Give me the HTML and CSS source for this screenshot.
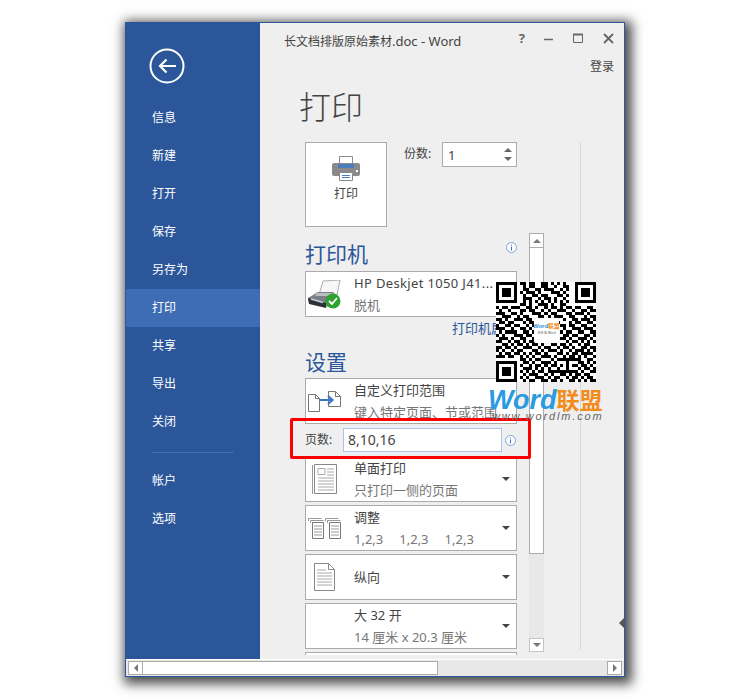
FILE: index.html
```html
<!DOCTYPE html>
<html lang="zh-CN">
<head>
  <meta charset="UTF-8" />
  <title>打印 - Word</title>
  <link rel="stylesheet" href="styles.css">
</head>
<body>
  <div class="window">
    <div class="upper">
      <nav class="side">
        <svg class="back" width="36" height="36" viewBox="0 0 36 36">
          <circle cx="18" cy="18" r="16.500" fill="none" stroke="#fff" stroke-width="2"/>
          <path d="M27 18H11M17.500 11.500L11 18l6.500 6.500" fill="none" stroke="#fff" stroke-width="2.200"/>
        </svg>
        <a>信息</a>
        <a>新建</a>
        <a>打开</a>
        <a>保存</a>
        <a>另存为</a>
        <a class="on">打印</a>
        <a>共享</a>
        <a>导出</a>
        <a>关闭</a>
        <div class="side-line"></div>
        <a>帐户</a>
        <a>选项</a>
      </nav>

      <main class="main">
        <div class="titlebar">
          <span class="doc-title">长文档排版原始素材<span class="latin">.doc - Word</span></span>
          <div class="controls">
            <span class="help">?</span>
            <svg width="10" height="10" viewBox="0 0 10 10"><path d="M0 6.500h9" stroke="#666" stroke-width="1.500"/></svg>
            <svg width="11" height="11" viewBox="0 0 11 11"><path d="M.5 1.500h9v8h-9z" fill="none" stroke="#666"/><path d="M0 1.500h10" stroke="#666" stroke-width="2"/></svg>
            <svg width="11" height="11" viewBox="0 0 11 11"><path d="M1 1l9 9M10 1l-9 9" stroke="#666" stroke-width="1.800"/></svg>
          </div>
        </div>
        <div class="login">登录</div>
        <h1>打印</h1>

        <div class="panel">
          <div class="top-row">
            <button class="print-btn">
              <svg width="28" height="25" viewBox="0 0 28 25">
                <path d="M7.500.5h13v9h-13z" fill="#fff" stroke="#8a8a8a"/>
                <path d="M2 7h24a2 2 0 0 1 2 2v9a2 2 0 0 1-2 2H2a2 2 0 0 1-2-2V9a2 2 0 0 1 2-2z" fill="#8a8a8a"/>
                <path d="M6 8h16v4H6z" fill="#4a7ebb"/>
                <path d="M7.500 16.500h13v8h-13z" fill="#fff" stroke="#8a8a8a"/>
                <path d="M10 19.500h8M10 21.500h8" stroke="#4a7ebb"/>
                <path d="M24 14h2v2h-2z" fill="#fff"/>
              </svg>
              <span>打印</span>
            </button>
            <label class="copies-label">份数:</label>
            <div class="copies">
              <span class="copies-val">1</span>
              <div class="spin"><i class="up"></i><i class="down"></i></div>
            </div>
          </div>

          <div class="scroll-area">
            <div class="col">
              <div class="head-row">
                <h2>打印机</h2>
                <svg class="info info-head" width="11" height="11" viewBox="0 0 11 11"><circle cx="5.500" cy="5.500" r="5" fill="#fff" stroke="#7ba3db"/><path d="M5.500 4.500v4M5.500 2.500v1" stroke="#3f76c4"/></svg>
              </div>
              <div class="opt">
                <div class="opt-icon">
                  <svg width="33" height="29" viewBox="0 0 33 29">
                    <path d="M15 1l17-1-3 15H11z" fill="#f7f7f7" stroke="#9a9a9a" stroke-width=".8"/>
                    <path d="M0 18l10-6h15l4 5v6l-11 4-17-4z" fill="#7b8087"/>
                    <path d="M0 18l18 5v5L1 24z" fill="#2d3136"/>
                    <path d="M3 19l12 3.500" stroke="#c5d2de" stroke-width="1.500"/>
                    <path d="M9 13h15l2 3H7z" fill="#b9bec3"/>
                    <circle cx="25" cy="21" r="7.500" fill="#2fa32f"/>
                    <path d="M21 21l3 3 5-6" fill="none" stroke="#fff" stroke-width="1.800"/>
                  </svg>
                </div>
                <div class="opt-text">
                  <div class="hp">HP Deskjet 1050 J41...</div>
                  <div class="sub">脱机</div>
                </div>
              </div>
              <div class="link-row">打印机属性</div>

              <h2 class="set-head">设置</h2>
              <div class="opt">
                <div class="opt-icon">
                  <svg width="33" height="21" viewBox="0 0 33 21">
                    <path d="M.5 3.500h7l4 4v13H.5zM7.500 3.500v4h4" fill="#fff" stroke="#777"/>
                    <path d="M20.500.5h7l5 5v10h-12zM27.500.5v5h5" fill="#fff" stroke="#777"/>
                    <path d="M12 9h12M20 5l4.500 4L20 13" fill="none" stroke="#3f76c4" stroke-width="2.200"/>
                  </svg>
                </div>
                <div class="opt-text">
                  <div>自定义打印范围</div>
                  <div class="sub">键入特定页面、节或范围</div>
                </div>
              </div>
              <div class="pages-row">
                <label class="pages-label">页数:</label>
                <div class="pages-input">8,10,16</div>
                <svg class="info" width="11" height="11" viewBox="0 0 11 11"><circle cx="5.500" cy="5.500" r="5" fill="#fff" stroke="#7ba3db"/><path d="M5.500 4.500v4M5.500 2.500v1" stroke="#3f76c4"/></svg>
              </div>

              <div class="opt gap">
                <div class="opt-icon">
                  <svg width="25" height="31" viewBox="0 0 25 31">
                    <path d="M.5 1v29" stroke="#999"/>
                    <path d="M2.500.5h22v29h-22z" fill="#fff" stroke="#888"/>
                    <path d="M6 4.500h7v6H6z" fill="none" stroke="#aaa"/>
                    <path d="M15 5h7M15 8h7M15 11h7M6 14h16M6 17h16M6 20h16M6 23h16M6 26h16" stroke="#aaa"/>
                  </svg>
                </div>
                <div class="opt-text">
                  <div>单面打印</div>
                  <div class="sub">只打印一侧的页面</div>
                </div>
                <i class="caret"></i>
              </div>
              <div class="opt gap">
                <div class="opt-icon">
                  <svg width="33" height="21" viewBox="0 0 33 21">
                    <path d="M.5 3V.5h13M2.500 5V2.500h13" fill="none" stroke="#999"/>
                    <path d="M4.500 4.500h11v16h-11z" fill="#fff" stroke="#777"/>
                    <path d="M6 8h8M6 11h8M6 14h8M6 17h8" stroke="#999"/>
                    <path d="M17.500 3V.5h13M19.500 5V2.500h13" fill="none" stroke="#999"/>
                    <path d="M21.500 4.500h11v16h-11z" fill="#fff" stroke="#777"/>
                    <path d="M23 8h8M23 11h8M23 14h8M23 17h8" stroke="#999"/>
                  </svg>
                </div>
                <div class="opt-text">
                  <div>调整</div>
                  <div class="sub collate"><span>1,2,3</span><span>1,2,3</span><span>1,2,3</span></div>
                </div>
                <i class="caret"></i>
              </div>
              <div class="opt gap">
                <div class="opt-icon">
                  <svg width="21" height="28" viewBox="0 0 21 28">
                    <path d="M.5.5h14l6 6v21H.5zM14.500.5v6h6" fill="#fff" stroke="#888"/>
                    <path d="M3 7h9M3 10h15M3 13h15M3 16h15M3 19h15M3 22h15" stroke="#aaa"/>
                  </svg>
                </div>
                <div class="opt-text">
                  <div>纵向</div>
                </div>
                <i class="caret"></i>
              </div>
              <div class="opt gap">
                <div class="opt-icon"></div>
                <div class="opt-text">
                  <div>大 32 开</div>
                  <div class="sub">14 厘米 x 20.3 厘米</div>
                </div>
                <i class="caret"></i>
              </div>
              <div class="opt gap"></div>
            </div>

            <div class="vbar">
              <div class="vbtn"><i class="tri-up"></i></div>
              <div class="vthumb"></div>
              <div class="vtrack"></div>
              <div class="vbtn last"><i class="tri-down"></i></div>
            </div>
          </div>
        </div>
      </main>
    </div>

    <div class="hbar">
      <div class="hbtn"><i class="tri-left"></i></div>
      <div class="hthumb"></div>
      <div class="htrack"></div>
      <div class="hbtn"><i class="tri-right"></i></div>
    </div>

    <!-- things pasted on top of the screenshot -->
    <div class="redbox"></div>
    <div class="collapse-tri"></div>
    <div class="qr">
      <svg id="qrSvg" width="100" height="100" viewBox="0 0 33 33" shape-rendering="crispEdges"></svg>
      <div class="qr-logo">
        <div class="qr-logo-name">Word<b>联盟</b></div>
        <div class="qr-logo-sub">天天 私 Word</div>
      </div>
    </div>
    <div class="brand">Word<b>联盟</b></div>
    <div class="brand-url">www.wordlm.com</div>
  </div>
  <script src="qr.js"></script>
</body>
</html>
```

FILE: styles.css
```css
* { box-sizing: border-box; }
html, body { margin: 0; height: 100%; background: #fff; }
body { padding: 22px 0 0 125px; font-family: "Noto Sans", "Noto Sans CJK SC", sans-serif; font-size: 12px; color: #444; overflow: hidden; }

.window { position: relative; width: 500px; height: 655px; border: 1px solid #2b579a; background: #efefef; display: flex; flex-direction: column; box-shadow: 3px 3px 11px 4px rgba(0,0,0,.7); }
.upper { flex: 1; display: flex; min-height: 0; }

.side { width: 134px; background: #2b579a; color: #fff; display: flex; flex-direction: column; padding-top: 25px; }
.back { margin: 0 0 15px 23px; flex: none; }
.side a { display: flex; align-items: center; height: 38px; padding: 0 0 2px 26px; flex: none; }
.side a.on { background: #3e6db5; }
.side-line { height: 1px; background: #3e6db5; margin: 11px 26px 9px 26px; width: 82px; flex: none; }

.main { flex: 1; min-width: 0; }
.titlebar { height: 36px; display: flex; justify-content: space-between; align-items: center; padding: 0 10px 0 24px; }
.doc-title { font-size: 12px; color: #444; }
.latin { font-size: 13px; }
.controls { display: flex; align-items: center; gap: 19px; margin-top: -6px; }
.help { font-weight: bold; font-size: 13px; color: #666; line-height: 13px; }
.login { height: 16px; line-height: 16px; text-align: right; padding-right: 10px; }
h1 { margin: 10px 0 13px 39px; font-size: 32px; line-height: 44px; font-weight: 300; color: #444; }

.panel { margin-left: 45px; width: 276px; height: 508px; border-right: 1px solid #d9d9d9; }
.top-row { height: 91px; display: flex; align-items: flex-start; }
.print-btn { width: 82px; height: 85px; border: 1px solid #ababab; background: #fff; display: flex; flex-direction: column; align-items: center; padding: 13px 0 0; font: inherit; color: #444; }
.print-btn span { margin-top: 5px; line-height: 16px; }
.copies-label { margin: 4px 0 0 17px; width: 38px; line-height: 16px; }
.copies { width: 75px; height: 25px; border: 1px solid #ababab; background: #fff; display: flex; justify-content: space-between; align-items: center; padding: 0 4px 0 5px; font-size: 13px; }
.spin { display: flex; flex-direction: column; gap: 5px; }
.up { border: 4px solid transparent; border-top: 0; border-bottom: 4px solid #666; }
.down { border: 4px solid transparent; border-bottom: 0; border-top: 4px solid #666; }

.scroll-area { display: flex; height: 422px; overflow: hidden; }
.col { width: 212px; padding-top: 8px; flex: none; }
.head-row { display: flex; justify-content: space-between; margin-bottom: 4px; }
h2 { margin: 0; font-size: 21px; line-height: 26px; font-weight: 400; color: #2b579a; }
.set-head { margin: 10px 0 3px; }
.info { flex: none; }
.info-head { margin-top: 1px; }

.opt { height: 46px; border: 1px solid #ababab; background: #fff; display: flex; align-items: center; flex: none; }
.opt.gap { margin-bottom: 3px; }
.opt-icon { width: 48px; padding-right: 12px; display: flex; justify-content: center; flex: none; }
.opt-text { flex: 1; font-size: 13px; line-height: 22px; min-width: 0; white-space: nowrap; margin-top: -1px; }
.sub { color: #777; }
.hp { letter-spacing: .35px; }
.collate { display: flex; gap: 16px; }
.caret { border: 4px solid transparent; border-bottom: 0; border-top: 4px solid #444; margin-right: 6px; flex: none; }

.link-row { height: 22px; line-height: 22px; text-align: right; color: #2b579a; font-size: 13px; }
.pages-row { height: 32px; display: flex; align-items: flex-start; padding-top: 4px; }
.pages-label { width: 38px; line-height: 24px; }
.pages-input { width: 159px; height: 24px; border: 1px solid #a9c6ea; background: #fff; padding-left: 4px; font-size: 14px; line-height: 22px; }
.pages-row .info { margin: 7px 0 0 3px; }

.vbar { width: 15px; height: 419px; margin-left: 12px; flex: none; display: flex; flex-direction: column; background: #e8e8e8; }
.vbtn { height: 15px; border: 1px solid #ababab; background: #fff; display: flex; justify-content: center; align-items: center; flex: none; }
.vbtn.last { height: 14px; border-color: #c4c4c4; }
.vthumb { height: 306px; border: 1px solid #ababab; border-top: 0; background: #fff; flex: none; }
.vtrack { flex: 1; }
.tri-up { border: 4px solid transparent; border-top: 0; border-bottom: 4px solid #777; }
.tri-down { border: 4px solid transparent; border-bottom: 0; border-top: 4px solid #777; }
.tri-left { border: 4px solid transparent; border-left: 0; border-right: 4px solid #777; }
.tri-right { border: 4px solid transparent; border-right: 0; border-left: 4px solid #777; }

.hbar { height: 17px; flex: none; display: flex; padding: 1px 2px; background: #e8e8e8; border-top: 1px solid #fff; }
.hbtn { width: 15px; border: 1px solid #ababab; background: #fff; display: flex; justify-content: center; align-items: center; flex: none; }
.hthumb { width: 295px; border: 1px solid #ababab; border-left: 0; background: #fff; flex: none; }
.htrack { flex: 1; }

.redbox { position: absolute; left: 164px; top: 395px; width: 241px; height: 41px; border: 3px solid #f00; border-radius: 2px; }
.collapse-tri { position: absolute; right: 0; top: 595px; border: 5px solid transparent; border-left: 0; border-right: 5px solid #555; }

.qr { position: absolute; left: 370px; top: 259px; width: 100px; height: 100px; background: #fff; }
.qr svg { display: block; }
.qr-logo { position: absolute; left: 38px; top: 36px; width: 25px; height: 25px; background: #fff; border-radius: 2px; box-shadow: 0 0 1px #999; text-align: center; padding-top: 4px; overflow: hidden; }
.qr-logo-name { font-family: "Liberation Sans", sans-serif; font-size: 6px; line-height: 8px; font-weight: bold; color: #2d8fd8; white-space: nowrap; margin-left: -2px; margin-right: -2px; }
.qr-logo-name b { color: #f08c1e; }
.qr-logo-sub { font-size: 3px; line-height: 6px; color: #555; white-space: nowrap; }

.brand { position: absolute; left: 362px; top: 367px; font-family: "Liberation Sans", "Noto Sans CJK SC", sans-serif; font-size: 27px; line-height: 20px; font-weight: bold; font-style: italic; color: #2a9be0; white-space: nowrap; }
.brand b { font-style: normal; font-size: 23px; font-weight: 700; color: #f28c1c; }
.brand-url { position: absolute; left: 366px; top: 387px; font-family: "Liberation Sans", sans-serif; font-size: 11px; line-height: 12px; font-style: italic; letter-spacing: 1.850px; color: #666; white-space: nowrap; }
```

FILE: qr.js
```js
// 33x33 code, finder squares are stamped on afterwards
const rows = [
  "000000001101100110101010000000000",
  "000000000101100110010011000000000",
  "000000000110011011100101000000000",
  "000000001011101000111010000000000",
  "000000000100110110001101000000000",
  "000000000111001011010010000000000",
  "000000000101010101010101000000000",
  "000000001101001110100110000000000",
  "101101110011010010110101101100110",
  "010010001101100101001110010011011",
  "111001101000111010110001101110100",
  "001110010110001101011100110001011",
  "110100111011010011100010011011101",
  "011011000101101100011000101100110",
  "100110110010110000000110110011001",
  "111001001101001000000010011101110",
  "010111100110110000000101100110011",
  "101000111011011000000011011001101",
  "011101001100101000000110100111010",
  "110010110101100000000001011010101",
  "001101011010110100110110100101100",
  "110110100111001011001011010011011",
  "101001011000110101110100101110101",
  "010110110101011010001101011011110",
  "111011001010100111010010110101001",
  "000000001101011000101111111100110",
  "000000000110100111010001000110101",
  "000000001001011010110101011011010",
  "000000000111010101001001000101101",
  "000000001010101101111111111010011",
  "000000000101110010100110101101100",
  "000000001010011101011001011010110",
  "000000000101100110110100110101011"
];

let d = "";
rows.forEach((row, y) => {
  [...row].forEach((c, x) => {
    if (c === "1") d += `M${x} ${y}h1v1h-1z`;
  });
});

const finder = (x, y) => `M${x} ${y}h7v7h-7zM${x + 1} ${y + 1}v5h5v-5zM${x + 2} ${y + 2}h3v3h-3z`;
d += finder(0, 0) + finder(26, 0) + finder(0, 26);

document.getElementById("qrSvg").innerHTML = `<path fill-rule="evenodd" d="${d}"/>`;
```
